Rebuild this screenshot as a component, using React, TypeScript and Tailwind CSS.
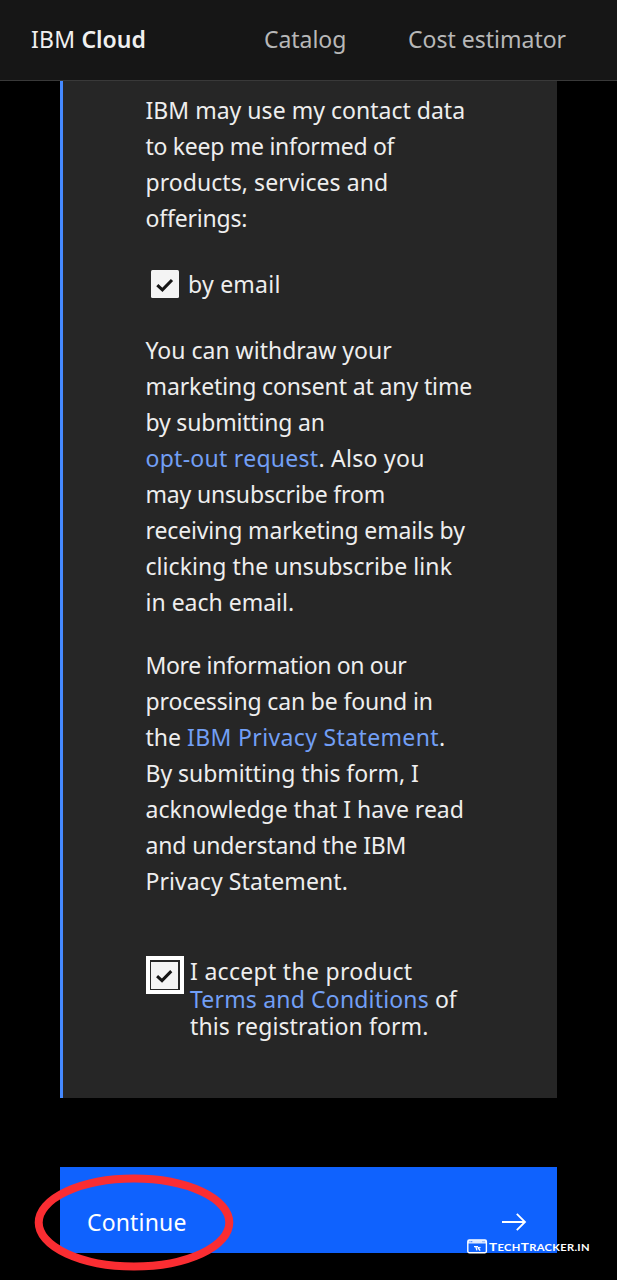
import type { ReactNode } from 'react';

function Line({ children, className = '' }: { children: ReactNode; className?: string }) {
  return <span className={`block whitespace-pre ${className}`}>{children}</span>;
}

function Link({ children, className = '' }: { children: ReactNode; className?: string }) {
  return (
    <a href="#" className={`text-[#729ff5] ${className}`}>
      {children}
    </a>
  );
}

function Check() {
  return (
    <svg viewBox="0 0 28 28" className="size-7" fill="none" stroke="#161616" strokeWidth="3.1">
      <path d="M6.3 15.2L11.4 19.8L21 10" />
    </svg>
  );
}

function Header() {
  return (
    <header className="flex h-[81px] items-center border-b border-[#393939] bg-[#161616] pb-[2px] pl-[31px] text-[#b8b8b8]">
      <div className="w-[233px] whitespace-pre text-[#f0f0f0]">
        <span className="tracking-[0.2px]">IBM </span>
        <span className="font-semibold tracking-[0px]">Cloud</span>
      </div>
      <nav className="flex">
        <a href="#" className="w-[144px] tracking-[-0.05px]">Catalog</a>
        <a href="#">Cost estimator</a>
      </nav>
    </header>
  );
}

function Watermark() {
  return (
    <div className="absolute top-[1238px] left-[467px] flex items-center text-white">
      <svg viewBox="0 0 21 15" className="h-[15px] w-[21px]" fill="none" stroke="currentColor">
        <rect x="0.8" y="1" width="18.6" height="12.7" rx="1.4" strokeWidth="1.4" />
        <path d="M1 2.9H19.2" strokeWidth="3.2" strokeOpacity="0.85" />
        <path d="M2.5 2.7H5.8M15.5 2.7H17.5" stroke="#0f62fe" strokeWidth="0.8" strokeDasharray="1 0.5" />
        <path d="M7 7.6H11M8.8 7.6L9.9 11.4M10.9 8L13.1 11.6M13.4 8.2L10.8 9.9" strokeWidth="1.3" />
      </svg>
      <span className="ml-[1px] origin-left translate-y-[1px] scale-x-[1.2] font-['Lato'] text-[9.3px] leading-[15px] font-bold tracking-[0.27px] whitespace-nowrap">
        <span className="text-[11.3px]">T</span>ECH<span className="text-[11.3px]">T</span>RACKER.IN
      </span>
    </div>
  );
}

export default function App() {
  return (
    <div className="relative h-[1280px] w-[617px] overflow-hidden bg-black font-['Noto_Sans',sans-serif] text-[23px] leading-9 text-[#eeeeee]">
      <Header />
      <main className="pr-[60px] pl-[60px]">
        <section className="h-[1017px] border-l-[3px] border-[#4589ff] bg-[#262626] pt-[11px] pl-[82.5px]">
          <p>
            <Line className="tracking-[0.02px]">IBM may use my contact data</Line>
            <Line className="tracking-[-0.28px]">to keep me informed of</Line>
            <Line className="tracking-[0.06px]">products, services and</Line>
            <Line className="tracking-[-0.2px]">offerings:</Line>
          </p>
          <label className="mt-[30px] flex h-9 items-center pl-[5.5px]">
            <span className="mr-[9px] block size-7 rounded-[1.5px] bg-[#f4f4f4]">
              <Check />
            </span>
            <span className="tracking-[0.25px]">by email</span>
          </label>
          <p className="mt-[30px]">
            <Line className="tracking-[0px]">You can withdraw your</Line>
            <Line className="tracking-[-0.12px]">marketing consent at any time</Line>
            <Line className="tracking-[-0.19px]">by submitting an</Line>
            <Line className="tracking-[0.27px]">
              <Link>opt-out request</Link>. Also you
            </Line>
            <Line className="tracking-[-0.17px]">may unsubscribe from</Line>
            <Line className="tracking-[-0.14px]">receiving marketing emails by</Line>
            <Line className="tracking-[0.06px]">clicking the unsubscribe link</Line>
            <Line className="tracking-[0px]">in each email.</Line>
          </p>
          <p className="mt-[27px]">
            <Line className="tracking-[-0.34px]">More information on our</Line>
            <Line className="tracking-[-0.15px]">processing can be found in</Line>
            <Line>
              the <Link className="tracking-[0.36px]">IBM Privacy Statement</Link>.
            </Line>
            <Line className="tracking-[-0.05px]">By submitting this form, I</Line>
            <Line className="tracking-[0px]">acknowledge that I have read</Line>
            <Line className="tracking-[-0.14px]">and understand the IBM</Line>
            <Line className="tracking-[0.08px]">Privacy Statement.</Line>
          </p>
          <div className="mt-[57px] flex">
            <span className="mr-[6.5px] flex size-[38px] items-center justify-center border-[4px] border-white bg-[#262626]">
              <span className="flex size-[27px] items-center justify-center bg-[#f4f4f4]">
                <Check />
              </span>
            </span>
            <p className="pt-[2px] leading-[27.5px]">
              <Line className="tracking-[0.3px]">I accept the product</Line>
              <Line>
                <Link className="tracking-[0.17px]">Terms and Conditions</Link> of
              </Line>
              <Line className="tracking-[0.1px]">this registration form.</Line>
            </p>
          </div>
        </section>
        <button className="mt-[69px] flex h-[86px] w-full items-center justify-between bg-[#0f62fe] pt-[24px] pr-[30px] pl-[27px] text-white">
          <span className="tracking-[0.15px]">Continue</span>
          <svg viewBox="0 0 26 20" className="h-5 w-[26px]" fill="none" stroke="currentColor" strokeWidth="1.8">
            <path d="M1 10H24M15.8 1.8L24 10L15.8 18.2" />
          </svg>
        </button>
      </main>
      <svg viewBox="0 0 200 98" className="absolute top-[1174px] left-[34px] h-[98px] w-[200px]" fill="none">
        <ellipse cx="100" cy="48.5" rx="95.3" ry="44" stroke="#fa2d32" strokeWidth="8" />
      </svg>
      <Watermark />
    </div>
  );
}
